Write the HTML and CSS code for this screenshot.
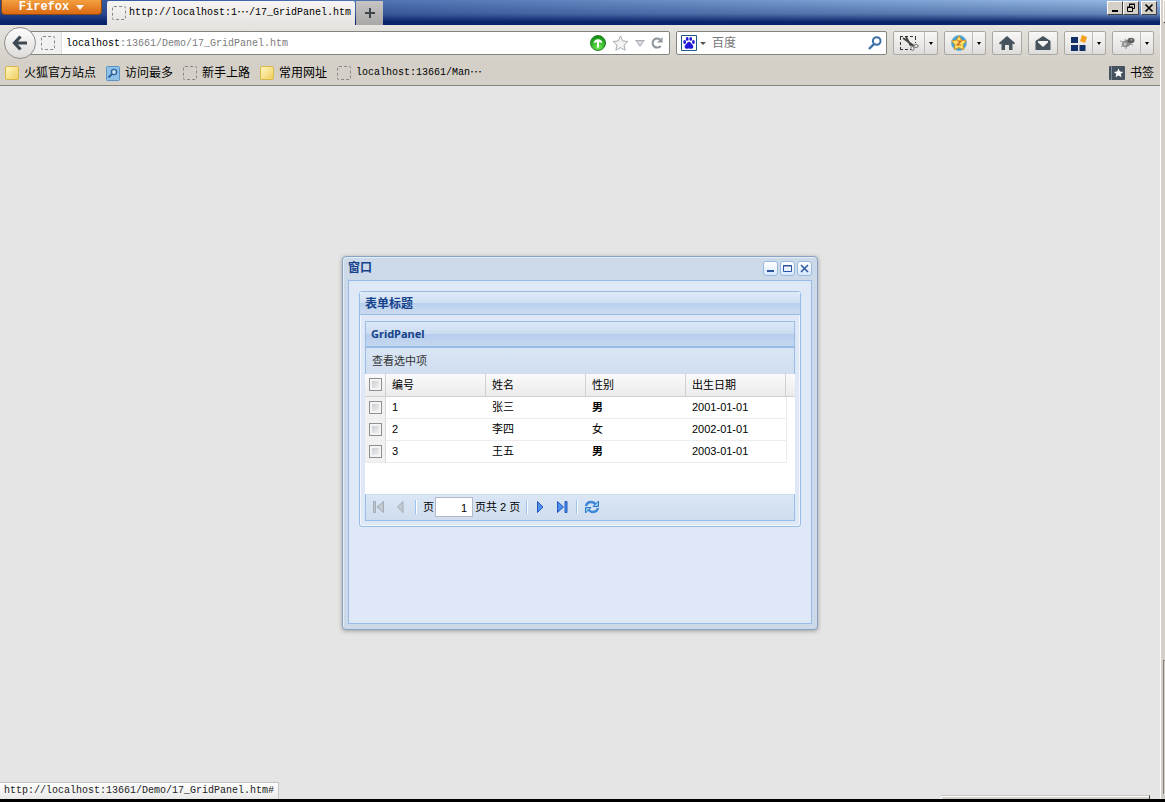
FILE: index.html
```
<!DOCTYPE html>
<html lang="zh-CN">
<head>
<meta charset="utf-8">
<title>GridPanel</title>
<link rel="stylesheet" href="styles.css">
</head>
<body>
<div class="desktop">
  <div class="browser">
    <header class="titlebar">
      <button class="firefox-btn" type="button">Firefox
        <svg width="8" height="5" viewBox="0 0 8 5"><path d="M0 0h8L4 5z" fill="#fff"/></svg>
      </button>
      <div class="tab"><span class="blank-icon"></span><span>http://localhost:1<span class="dots">…</span>/17_GridPanel.htm</span></div>
      <button class="new-tab" type="button" aria-label="New tab">
        <svg width="12" height="12" viewBox="0 0 12 12"><path d="M6 1v10M1 6h10" stroke="#3c444c" stroke-width="2"/></svg>
      </button>
      <div class="caption-buttons">
        <button type="button" aria-label="Minimize"><svg width="12" height="10" viewBox="0 0 12 10"><path d="M3 7h6v2H3z"/></svg></button>
        <button type="button" aria-label="Restore"><svg width="12" height="10" viewBox="0 0 12 10"><path d="M4.500 4V1.500h5v4H8M4 1h6M2.500 4.500h5v4h-5zM2 4h6" fill="none" stroke="#000"/></svg></button>
        <button class="caption-close" type="button" aria-label="Close"><svg width="12" height="10" viewBox="0 0 12 10"><path d="M2.500 1.500l7 7M9.500 1.500l-7 7" stroke="#000" stroke-width="1.700"/></svg></button>
      </div>
    </header>

    <nav class="toolbar">
      <button class="back" type="button" aria-label="Back">
        <svg width="16" height="16" viewBox="0 0 16 16"><path d="M8.500 1.500L2.500 8l6 6.500M3 8h12" fill="none" stroke="#3d4a55" stroke-width="3.200"/></svg>
      </button>
      <div class="location">
        <span class="identity"><span class="blank-icon"></span></span>
        <span class="url"><b>localhost</b>:13661/Demo/17_GridPanel.htm</span>
        <span class="location-icons">
          <svg width="16" height="16" viewBox="0 0 16 16"><defs><radialGradient id="green" cx=".5" cy=".8" r=".7"><stop offset="0" stop-color="#6fee55"/><stop offset="1" stop-color="#159415"/></radialGradient></defs><circle cx="8" cy="8" r="7.500" fill="url(#green)" stroke="#2c7d2c"/><path d="M3.500 8Q4.500 4.300 8 4.300T12.500 8L9 7.300V12.500H7V7.300z" fill="#fff"/></svg>
          <svg width="17" height="16" viewBox="0 0 17 16"><path d="M8.500 1l2.200 4.900 5.300.6-4 3.500 1.200 5.300-4.700-2.700-4.700 2.700L5 10 1 6.500l5.300-.6z" fill="#f4f4f4" stroke="#a9abb0"/></svg>
          <svg width="10" height="7" viewBox="0 0 10 7"><path d="M.7.500h8.600L5 6.300z" fill="#d5d8dc" stroke="#a9adb3"/></svg>
          <svg width="12" height="12" viewBox="0 0 12 12"><path d="M9.700 8.800A4.500 4.500 0 1 1 9 2.600" fill="none" stroke="#8d949b" stroke-width="2"/><path d="M11.500 0v5.500H6z" fill="#8d949b"/></svg>
        </span>
      </div>
      <div class="search">
        <svg width="16" height="16" viewBox="0 0 16 16"><path d="M.5.500h15v15H.5z" fill="#fff" stroke="#1f5a86"/><g fill="#2418d8"><ellipse cx="3.700" cy="7" rx="1.400" ry="1.900"/><ellipse cx="6.200" cy="3.900" rx="1.400" ry="1.900"/><ellipse cx="9.700" cy="3.900" rx="1.400" ry="1.900"/><ellipse cx="12.400" cy="7" rx="1.400" ry="1.900"/><path d="M8 6.800c1.800 0 2.200 2 3.400 3 1.600 1.300 1.100 4-1 4-1 0-1.500-.4-2.400-.4s-1.400.4-2.400.4c-2.100 0-2.600-2.700-1-4 1.200-1 1.600-3 3.400-3z"/></g></svg>
        <svg width="6" height="3" viewBox="0 0 6 3"><path d="M0 0h6L3 3z" fill="#555"/></svg>
        <input type="text" placeholder="百度" aria-label="百度">
        <svg width="14" height="14" viewBox="0 0 14 14"><circle cx="8.700" cy="5" r="3.800" fill="none" stroke="#3a70a8" stroke-width="2"/><path d="M6 8l-5 5" stroke="#3a70a8" stroke-width="2.400"/></svg>
      </div>
      <button class="tool tool-wide" type="button" aria-label="Capture">
        <svg width="20" height="16" viewBox="0 0 20 16"><path d="M1 1.500h16M1.500 2v13M1 14.500h11M16.500 2v6" fill="none" stroke="#333" stroke-dasharray="3 2"/><path d="M4 3l11 8M7 2l5 9" stroke="#444" stroke-width="1.800"/><ellipse cx="17" cy="11" rx="2.300" ry="1.500" fill="none" stroke="#777"/><ellipse cx="13.500" cy="13.500" rx="1.500" ry="2" fill="none" stroke="#777"/></svg>
        <span class="drop"></span>
      </button>
      <button class="tool tool-split" type="button" aria-label="Star">
        <svg width="16" height="16" viewBox="0 0 16 16"><circle cx="8" cy="8" r="7.500" fill="#3f9fd4" stroke="#7bb7d5"/><path d="M8 .8l2.400 4.300 4.900.9-3.300 3.700.6 4.900L8 12.600l-4.600 2 .6-4.900L.7 6l4.900-.9z" fill="#ffe36b" stroke="#d8941c"/><path d="M6 6h4L6.200 10H10" fill="none" stroke="#cf5a12" stroke-width="1.200"/></svg>
        <span class="drop"></span>
      </button>
      <button class="tool" type="button" aria-label="Home">
        <svg width="16" height="14" viewBox="0 0 16 14"><path d="M8 0l8 7-1 1.500-1.500-1V14H10V9H6v5H2.500V7.500L1 8.500 0 7z" fill="#46525d"/></svg>
      </button>
      <button class="tool" type="button" aria-label="Mail">
        <svg width="16" height="14" viewBox="0 0 16 14"><path d="M8 0l7.500 5v9H.5V5z" fill="#46525d"/><path d="M3 5h10v1.500L8 11 3 6.500z" fill="#f4f4f4"/></svg>
      </button>
      <button class="tool tool-split" type="button" aria-label="Apps">
        <svg width="16" height="16" viewBox="0 0 16 16"><path d="M0 2h7v6H0zM0 10h7v6H0zM8.500 10h6v6h-6z" fill="#13306b"/><path d="M11 0l5 2-2 6-5-2z" fill="#f6a01c"/></svg>
        <span class="drop"></span>
      </button>
      <button class="tool tool-split" type="button" aria-label="Firebug">
        <svg width="16" height="14" viewBox="0 0 16 14"><path d="M1 5l4 1M2 11l4-3M7 13l1-4M6 3l2 3M14 9l-3-1" stroke="#999"/><ellipse cx="7.500" cy="7.500" rx="5" ry="3.400" transform="rotate(-20 7.500 7.500)" fill="#8c8c8c"/><ellipse cx="12" cy="4.500" rx="3.500" ry="2.800" fill="#5c5c5c"/><circle cx="6" cy="8" r="1.500" fill="#c4c4c4"/><circle cx="12.500" cy="3.800" r="1" fill="#aaa"/></svg>
        <span class="drop"></span>
      </button>
    </nav>

    <nav class="bookmarks">
      <a href="#"><span class="folder"></span>火狐官方站点</a>
      <a href="#"><svg width="14" height="15" viewBox="0 0 14 15"><rect x=".5" y=".5" width="13" height="14" rx="1" fill="#8fc0e6" stroke="#5a93c2"/><circle cx="8" cy="6" r="2.600" fill="#cfe5f6" stroke="#28659c" stroke-width="1.400"/><path d="M6 8l-3.500 3.500" stroke="#28659c" stroke-width="1.800"/></svg>访问最多</a>
      <a href="#"><span class="blank-icon"></span>新手上路</a>
      <a href="#"><span class="folder"></span>常用网址</a>
      <a class="mono" href="#"><span class="blank-icon"></span><span>localhost:13661/Man<span class="dots">…</span></span></a>
      <a class="bookmarks-menu" href="#"><svg width="16" height="14" viewBox="0 0 16 14"><rect width="16" height="14" rx="1" fill="#46525d"/><path d="M2.500 0v14" stroke="#7f8b95"/><path d="M9.500 2.500l1.400 3 3.300.4-2.500 2.100.8 3.300-3-1.700-3 1.700.8-3.300L4.800 5.900l3.300-.4z" fill="#fff"/></svg>书签</a>
    </nav>

    <main class="page">
      <section class="window">
        <header class="window-head">
          <h1>窗口</h1>
          <button type="button" aria-label="最小化"><svg width="11" height="11" viewBox="0 0 11 11"><path d="M2 7h7v2H2z" fill="#2b55a0"/></svg></button>
          <button type="button" aria-label="最大化"><svg width="11" height="11" viewBox="0 0 11 11"><path d="M1.500 2.500h8v6h-8zM1 3h9" fill="none" stroke="#2b55a0"/></svg></button>
          <button type="button" aria-label="关闭"><svg width="11" height="11" viewBox="0 0 11 11"><path d="M2 2l7 7M9 2L2 9" stroke="#2b55a0" stroke-width="1.500"/></svg></button>
        </header>
        <div class="window-body">
          <section class="form-panel">
            <h2>表单标题</h2>
            <div class="form-body">
              <section class="grid-panel">
                <h3>GridPanel</h3>
                <div class="grid-toolbar"><button type="button">查看选中项</button></div>
                <div class="grid-view">
                  <table>
                    <colgroup><col class="col-check"><col class="col-data"><col class="col-data"><col class="col-data"><col class="col-data"><col></colgroup>
                    <thead><tr><th><input type="checkbox" aria-label="全选"></th><th>编号</th><th>姓名</th><th>性别</th><th>出生日期</th><th></th></tr></thead>
                    <tbody>
                      <tr><td><input type="checkbox" aria-label="选择 1"></td><td>1</td><td>张三</td><td><b>男</b></td><td>2001-01-01</td><td></td></tr>
                      <tr><td><input type="checkbox" aria-label="选择 2"></td><td>2</td><td>李四</td><td>女</td><td>2002-01-01</td><td></td></tr>
                      <tr><td><input type="checkbox" aria-label="选择 3"></td><td>3</td><td>王五</td><td><b>男</b></td><td>2003-01-01</td><td></td></tr>
                    </tbody>
                  </table>
                </div>
                <div class="paging">
                  <button type="button" aria-label="首页" disabled><svg width="12" height="12" viewBox="0 0 12 12"><path d="M.5.500h2v11h-2zM10.500.500v11L4 6z" fill="#c3c9d0" stroke="#a3abb5"/></svg></button>
                  <button type="button" aria-label="上一页" disabled><svg width="12" height="12" viewBox="0 0 12 12"><path d="M8 .5v11L2.500 6z" fill="#c3c9d0" stroke="#a3abb5"/></svg></button>
                  <span class="sep"></span>
                  <label for="page-no">页</label>
                  <input id="page-no" type="text" value="1">
                  <span class="total">页共 2 页</span>
                  <span class="sep"></span>
                  <button type="button" aria-label="下一页"><svg width="12" height="12" viewBox="0 0 12 12"><path d="M3.500.500v11L9 6z" fill="#4f8fee" stroke="#2358c0"/></svg></button>
                  <button type="button" aria-label="末页"><svg width="12" height="12" viewBox="0 0 12 12"><path d="M1.500.500v11L7.500 6zM9 .5h2v11H9z" fill="#4f8fee" stroke="#2358c0"/></svg></button>
                  <span class="sep"></span>
                  <button type="button" aria-label="刷新"><svg width="16" height="14" viewBox="0 0 16 14"><path d="M2 6Q3 2 7 2q3 0 4.500 2.500M14 8q-1 4-5 4-3 0-4.500-2.500" fill="none" stroke="#3b86d8" stroke-width="2.400"/><path d="M14.500 1v5.500H9zM1.500 13V7.500H7z" fill="#8cc8f7" stroke="#2f78cc"/></svg></button>
                </div>
              </section>
            </div>
          </section>
        </div>
      </section>
      <div class="status">http://localhost:13661/Demo/17_GridPanel.htm#</div>
      <div class="peek"></div>
    </main>
  </div>
  <aside class="edge"><span class="edge-top"></span><span class="edge-bottom"></span></aside>
</div>
</body>
</html>
```
FILE: styles.css
```
* { box-sizing: border-box; }

body {
  margin: 0;
  background: #000;
  color: #000;
  font: 12px/16px "Liberation Sans", "Noto Sans CJK SC", sans-serif;
}

button, input { font: inherit; color: inherit; margin: 0; }
button { padding: 0; border: 0; background: none; display: flex; align-items: center; justify-content: center; }
svg { display: block; flex: none; }
a { color: inherit; text-decoration: none; }
h1, h2, h3 { margin: 0; font-size: 12px; line-height: 16px; color: #15428b; }

.desktop { display: flex; min-height: 100vh; border-bottom: 3px solid #000; background: #e5e5e5; }
.browser { flex: 1; display: flex; flex-direction: column; min-width: 0; }

/* Title bar */
.titlebar {
  display: flex;
  align-items: flex-start;
  height: 25px;
  padding-left: 1px;
  background:
    linear-gradient(to bottom, rgba(10, 36, 106, 0), rgba(10, 36, 106, .35) 55%, #0a246a 88%),
    linear-gradient(to right, #2f5199, #98bce6);
}
.firefox-btn {
  gap: 7px;
  width: 101px;
  height: 15px;
  border: 1px solid #8a4a10;
  border-top: 0;
  border-radius: 0 0 4px 4px;
  background: linear-gradient(#f3a040, #dc6a12);
  color: #fff;
  font: bold 12px/14px "Liberation Mono", monospace;
}
.tab {
  display: flex;
  align-items: center;
  gap: 3px;
  height: 24px;
  margin: 1px 1px 0 5px;
  padding: 0 4px 0 5px;
  border-radius: 2px 2px 0 0;
  background: linear-gradient(#f6f5f3, #e6e4e0);
  font: 10px/16px "Liberation Mono", monospace;
  white-space: nowrap;
}
.dots { font-family: "Noto Sans CJK SC", sans-serif; font-size: 12px; line-height: 12px; vertical-align: -2px; }
.blank-icon { flex: none; width: 14px; height: 14px; border: 1px dashed #888; border-radius: 2px; }
.new-tab { width: 27px; height: 24px; margin-top: 1px; background: linear-gradient(#c6c5c3, #a9a8a6); }
.caption-buttons { display: flex; margin: 1px 3px 0 auto; }
.caption-buttons button {
  width: 16px;
  height: 14px;
  background: #d4d0c8;
  border: 1px solid;
  border-color: #fff #404040 #404040 #fff;
}
.caption-buttons .caption-close { margin-left: 2px; }

/* Navigation bar */
.toolbar {
  display: flex;
  align-items: center;
  gap: 6px;
  height: 36px;
  padding: 0 6px 0 4px;
  background: linear-gradient(#e6e4e0, #d5d1c9);
}
.back {
  position: relative;
  flex: none;
  width: 32px;
  height: 32px;
  margin-right: -14px;
  border: 1px solid #8e8e8c;
  border-radius: 50%;
  background: linear-gradient(#fdfdfd, #dcdbd9);
}
.location {
  flex: 1;
  display: flex;
  align-items: center;
  height: 24px;
  padding-right: 6px;
  border: 1px solid #858380;
  border-radius: 2px;
  background: #fff;
}
.identity { display: flex; align-items: center; align-self: stretch; padding: 0 6px 0 12px; background: #f1f1f1; border-right: 1px solid #dcdcdc; }
.url { padding: 2px 0 0 4px; color: #7b7b7b; font: 10px/16px "Liberation Mono", monospace; }
.url b { color: #000; font-weight: normal; }
.location-icons { display: flex; align-items: center; gap: 6px; margin-left: auto; }
.search {
  display: flex;
  align-items: center;
  gap: 3px;
  width: 211px;
  height: 24px;
  padding: 0 4px;
  border: 1px solid #858380;
  border-radius: 2px;
  background: #fff;
}
.search input { flex: 1; min-width: 0; padding: 0 0 0 3px; border: 0; background: none; outline: 0; }
.search input::placeholder { color: #777; opacity: 1; }
.tool {
  flex: none;
  width: 30px;
  height: 24px;
  border: 1px solid #aaa8a3;
  border-radius: 2px;
  background: linear-gradient(#f8f8f7, #dfdddb);
}
.tool-split { width: 42px; justify-content: space-between; padding-left: 6px; }
.tool-wide { width: 45px; justify-content: space-between; padding-left: 5px; }
.drop { display: flex; align-items: center; justify-content: center; width: 13px; height: 22px; border-left: 1px solid #bdbbb7; }
.drop::before { content: ""; border: 2px solid transparent; border-top: 3px solid #000; border-bottom: 0; }

/* Bookmarks bar */
.bookmarks {
  display: flex;
  align-items: center;
  gap: 10px;
  height: 25px;
  padding: 0 6px 0 5px;
  background: #d4d0c8;
  border-bottom: 1px solid #85837f;
  white-space: nowrap;
}
.bookmarks a { display: flex; align-items: center; gap: 5px; }
.bookmarks .mono { font: 10px/16px "Liberation Mono", monospace; }
.bookmarks .bookmarks-menu { margin-left: auto; }
.folder { width: 14px; height: 14px; border: 1px solid #d9b848; border-radius: 2px; background: linear-gradient(135deg, #fff6bf, #efcf60); }

/* Page area */
.page { position: relative; flex: 1; display: flex; align-items: center; justify-content: center; background: #e5e5e5; }
.status {
  position: absolute;
  left: 0;
  bottom: 0;
  padding: 0 4px;
  border-top: 1px solid #c4c4c4;
  border-right: 1px solid #c4c4c4;
  background: linear-gradient(#fff, #e8e8e8);
  color: #222;
  font: 10px/16px "Liberation Mono", monospace;
}
.peek {
  position: absolute;
  right: 10px;
  bottom: 0;
  width: 209px;
  height: 4px;
  border-top: 1px solid #c9c6bf;
  border-right: 1px solid #404040;
  background: #d4d0c8;
  box-shadow: inset 1px 1px #fff;
}

/* Ext window */
.window {
  width: 476px;
  padding: 0 5px 5px;
  border: 1px solid #8ba3c2;
  border-radius: 4px;
  background: #ccd9e8;
  box-shadow: inset 1px 1px #e4edf7, 0 1px 4px #9a9a9a;
  font-size: 11px;
}
.window-head { display: flex; align-items: center; gap: 2px; height: 23px; }
.window-head h1 { flex: 1; }
.window-head button { width: 15px; height: 15px; border: 1px solid #9ab9e0; border-radius: 3px; background: linear-gradient(#fff, #d6e8fa); }
.window-body { min-height: 344px; padding: 10px; border: 1px solid #99bbe8; background: #dfe8f6; }
.form-panel { border: 1px solid #99bbe8; border-radius: 3px; background: #dfe8f6; box-shadow: inset 1px 1px #f4f8fd, inset -1px -1px #f4f8fd; }
.form-panel h2 {
  padding: 4px 5px 2px;
  border-bottom: 1px solid #99bbe8;
  background: linear-gradient(#e0eaf7, #cfdff2 48%, #b8d0ee 50%, #cbdbef);
}
.form-body { padding: 6px 5px 5px; }
.grid-panel h3 {
  padding: 4px 5px;
  border: 1px solid #99bbe8;
  border-bottom-width: 2px;
  background: linear-gradient(#dce8f6, #cbdcf1 48%, #b7cdec 50%, #c5d8f1);
  font-family: "Noto Sans", sans-serif;
  font-size: 11px;
}
.grid-toolbar {
  padding: 5px 6px;
  border: 1px solid #99bbe8;
  border-width: 0 1px;
  background: linear-gradient(#dae6f4, #cfddef);
  color: #333;
}
.grid-view { min-height: 120px; background: #fff; }
.grid-view table { width: 100%; border-collapse: separate; border-spacing: 0; table-layout: fixed; }
.col-check { width: 21px; }
.col-data { width: 100px; }
.grid-view th, .grid-view td { height: 22px; padding: 0 6px; text-align: left; font-weight: normal; line-height: 16px; }
.grid-view th { height: 23px; border-right: 1px solid #d0d0d0; border-bottom: 1px solid #d0d0d0; background: linear-gradient(#fafafa, #ebebed); }
.grid-view th:last-child { padding: 0; border-right: 0; }
.grid-view td { border-bottom: 1px solid #ededed; }
.grid-view td:last-child { padding: 0; border-bottom: 0; border-left: 1px solid #ededed; }
.grid-view th:first-child, .grid-view td:first-child { padding: 0 0 0 4px; }
.grid-view td:first-child { border-right: 1px solid #d9d9d9; background: #f1f1f1; }
.grid-view input {
  display: block;
  appearance: none;
  width: 13px;
  height: 13px;
  border: 1px solid #8e8f8f;
  background: linear-gradient(135deg, #c0c5cc, #f8f8f8);
  box-shadow: inset 0 0 0 2px #f4f4f4;
}
.paging {
  display: flex;
  align-items: center;
  height: 27px;
  padding: 0 7px;
  border: 1px solid #99bbe8;
  border-top-color: #c9dbf0;
  background: linear-gradient(#dae6f4, #cfddef);
}
.paging button { margin-right: 10px; }
.paging .sep { width: 2px; height: 14px; margin-right: 6px; border-left: 1px solid #99c4f0; border-right: 1px solid #fff; }
.paging button:nth-of-type(2), .paging button:nth-of-type(4) { margin-right: 8px; }
.paging input { width: 38px; height: 20px; margin: 0 2px 0 1px; padding: 2px 5px 0; border: 1px solid #b5b8c8; background: #fff; text-align: right; }
.paging .total { margin-right: 6px; }

/* Strip at the right of the browser */
.edge { display: flex; flex-direction: column; justify-content: space-between; width: 5px; padding: 0 0 4px 3px; background: #d4d0c8; box-shadow: inset 1px 0 #fff; }
.edge-top { height: 23px; border: 1px solid #fff; border-bottom-color: #404040; border-right: 0; }
.edge-bottom { height: 135px; border: 1px solid #808080; border-right: 0; border-bottom-color: #fff; }
```
